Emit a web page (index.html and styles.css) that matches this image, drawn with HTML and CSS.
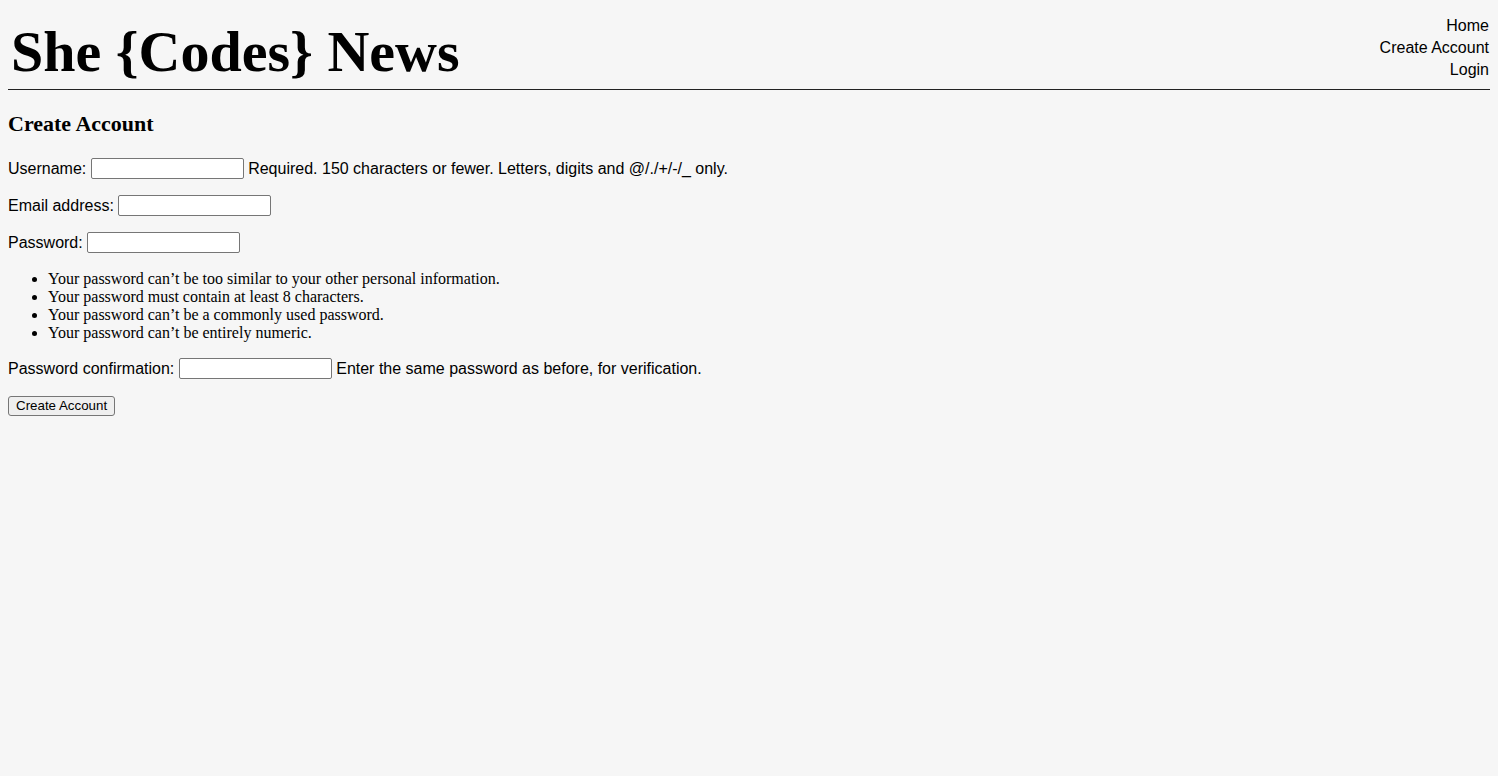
FILE: index.html
```html
<!DOCTYPE html>
<html lang="en">
<head>
<meta charset="utf-8">
<title>She {Codes} News</title>
<link rel="stylesheet" href="styles.css">
</head>
<body>
<div class="page">
  <header class="site-header">
    <h1 class="site-title">She {Codes} News</h1>
    <nav class="site-nav">
      <a href="#">Home</a>
      <a href="#">Create Account</a>
      <a href="#">Login</a>
    </nav>
  </header>
  <main>
    <h2 class="page-title">Create Account</h2>
    <form class="account-form">
      <p class="field"><label for="u">Username:</label> <input id="u" type="text"> <span class="help">Required. 150 characters or fewer. Letters, digits and @/./+/-/_ only.</span></p>
      <p class="field"><label for="e">Email address:</label> <input id="e" type="email"></p>
      <p class="field"><label for="p1">Password:</label> <input id="p1" type="password"></p>
      <ul class="rules">
        <li>Your password can’t be too similar to your other personal information.</li>
        <li>Your password must contain at least 8 characters.</li>
        <li>Your password can’t be a commonly used password.</li>
        <li>Your password can’t be entirely numeric.</li>
      </ul>
      <p class="field"><label for="p2">Password confirmation:</label> <input id="p2" type="password"> <span class="help">Enter the same password as before, for verification.</span></p>
      <button type="button" class="submit">Create Account</button>
    </form>
  </main>
</div>
</body>
</html>
```

FILE: styles.css
```css
html, body {
  margin: 0;
  padding: 0;
  background: #ffffff;
}

.page {
  box-sizing: border-box;
  width: 1498px;
  height: 776px;
  background: #f6f6f6;
  padding: 8px;
  color: #000;
  font-family: "Liberation Sans", Arial, sans-serif;
  font-size: 16px;
}

.site-header {
  display: flex;
  justify-content: space-between;
  align-items: flex-end;
  border-bottom: 1px solid #222;
  padding-bottom: 8px;
  height: 73px;
  box-sizing: content-box;
}

.site-title {
  margin: 0;
  padding-left: 3px;
  font-family: "Liberation Serif", "Times New Roman", serif;
  font-weight: 700;
  font-size: 58px;
  line-height: 58px;
}

.site-nav {
  display: flex;
  flex-direction: column;
  align-items: flex-end;
  padding-right: 1px;
}

.site-nav a {
  color: #000;
  text-decoration: none;
  line-height: 22px;
}

.page-title {
  margin: 20px 0 20px;
  font-family: "Liberation Serif", "Times New Roman", serif;
  font-weight: 700;
  font-size: 22px;
  line-height: 28px;
}

.field {
  margin: 16px 0;
  line-height: 21px;
}

.account-form .field:first-child {
  margin-top: 0;
}

.field input {
  box-sizing: border-box;
  width: 153px;
  height: 21px;
  padding: 1px 2px;
  border: 1px solid #767676;
  border-radius: 2px;
  background: #fff;
  vertical-align: top;
  font-size: 13px;
}

.rules {
  margin: 17px 0 16px;
  padding-left: 40px;
  font-family: "Liberation Serif", "Times New Roman", serif;
  font-size: 16px;
  line-height: 18px;
}

.submit {
  margin-top: 1px;
  font-family: "Liberation Sans", Arial, sans-serif;
  font-size: 13.33px;
  height: 20px;
  padding: 0 7px;
  border: 1px solid #767676;
  border-radius: 3px;
  background: #efefef;
  color: #000;
  line-height: 16px;
}
```
